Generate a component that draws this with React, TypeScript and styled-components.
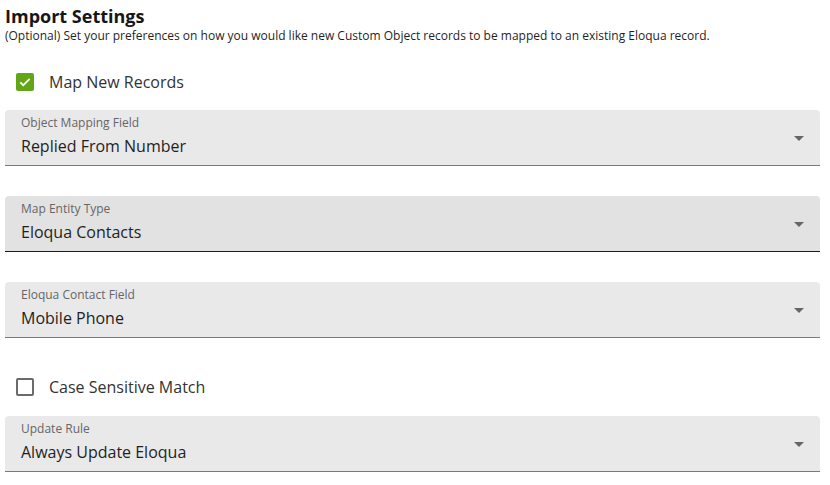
import React from "react";
import styled, { createGlobalStyle } from "styled-components";

const Global = createGlobalStyle`
  html, body { margin: 0; padding: 0; background: #fff; }
  body { font-family: "Open Sans", "Noto Sans", sans-serif; color: #1f1f1f; }
`;

const Page = styled.div`
  padding: 4px 10px 0 5px;
  display: flex;
  flex-direction: column;
`;

const Title = styled.h1`
  margin: 0;
  font-size: 18px;
  line-height: 24px;
  font-weight: 700;
  color: #161616;
`;

const Subtitle = styled.p`
  margin: 0;
  font-size: 12px;
  line-height: 16px;
  color: #1f1f1f;
`;

const CheckRow = styled.label<{ $mt: number; $mb: number }>`
  display: flex;
  align-items: center;
  gap: 15px;
  margin: ${(p) => p.$mt}px 0 ${(p) => p.$mb}px 11px;
  height: 20px;
  font-size: 16px;
  color: #333;
`;

const Box = styled.span<{ $checked: boolean }>`
  width: 18px;
  height: 18px;
  box-sizing: border-box;
  border-radius: 2px;
  display: flex;
  align-items: center;
  justify-content: center;
  background: ${(p) => (p.$checked ? "#62a616" : "#fff")};
  border: ${(p) => (p.$checked ? "none" : "2px solid #6b6b6b")};
`;

const Field = styled.div<{ $active?: boolean; $mb: number }>`
  position: relative;
  height: 56px;
  box-sizing: border-box;
  background: ${(p) => (p.$active ? "#e2e2e2" : "#e9e9e9")};
  border-bottom: 1px solid ${(p) => (p.$active ? "#1a1a1a" : "#7a7a7a")};
  border-radius: 4px 4px 0 0;
  padding: 5px 16px 0 16px;
  margin-bottom: ${(p) => p.$mb}px;
  display: flex;
  flex-direction: column;
`;

const FieldLabel = styled.span`
  font-size: 12px;
  line-height: 16px;
  color: #666;
`;

const FieldValue = styled.span`
  font-size: 16px;
  line-height: 24px;
  margin-top: 3px;
  color: #1f1f1f;
`;

const Arrow = styled.span`
  position: absolute;
  right: 16px;
  top: 26px;
  width: 0;
  height: 0;
  border-left: 5px solid transparent;
  border-right: 5px solid transparent;
  border-top: 5px solid #666;
`;

const Check = () => (
  <svg width="14" height="14" viewBox="0 0 24 24">
    <path d="M4 12.5l5 5L20 6.5" fill="none" stroke="#fff" strokeWidth="3" />
  </svg>
);

const Select = ({ label, value, active, mb }: { label: string; value: string; active?: boolean; mb: number }) => (
  <Field $active={active} $mb={mb}>
    <FieldLabel>{label}</FieldLabel>
    <FieldValue>{value}</FieldValue>
    <Arrow />
  </Field>
);

export default function App() {
  return (
    <>
      <Global />
      <Page>
        <Title>Import Settings</Title>
        <Subtitle>
          (Optional) Set your preferences on how you would like new Custom Object records to be mapped to an existing Eloqua record.
        </Subtitle>
        <CheckRow $mt={28} $mb={18}>
          <Box $checked>
            <Check />
          </Box>
          Map New Records
        </CheckRow>
        <Select label="Object Mapping Field" value="Replied From Number" mb={30} />
        <Select label="Map Entity Type" value="Eloqua Contacts" active mb={30} />
        <Select label="Eloqua Contact Field" value="Mobile Phone" mb={0} />
        <CheckRow $mt={39} $mb={19}>
          <Box $checked={false} />
          Case Sensitive Match
        </CheckRow>
        <Select label="Update Rule" value="Always Update Eloqua" mb={0} />
      </Page>
    </>
  );
}
